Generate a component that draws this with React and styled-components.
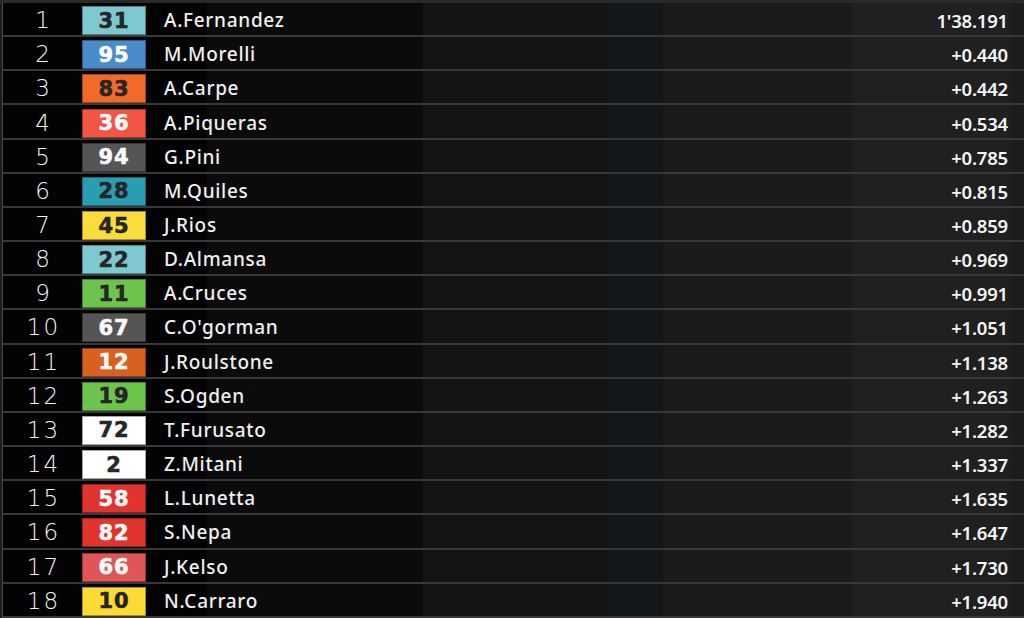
import React from "react";
import styled, { createGlobalStyle } from "styled-components";

const GlobalStyle = createGlobalStyle`
  html, body {
    margin: 0;
    padding: 0;
    background: #000;
    overflow: hidden;
  }
  * { box-sizing: border-box; }
`;

const Board = styled.div`
  width: 1024px;
  height: 618px;
  padding-top: 3px;
  display: grid;
  grid-template-rows: repeat(18, 34.17px);
  background:
    linear-gradient(#2a2a2a, #2a2a2a) top / 100% 3px no-repeat,
    linear-gradient(
      to right,
      #1c1c1c 0 2px,
      #4a4a4a 2px 3px,
      #030303 3px 207px,
      #0b0b0b 207px 423px,
      #141414 423px 608px,
      #121819 608px 663px,
      #1b1b1b 663px 852px,
      #202020 852px 1011px,
      #1c1c1c 1011px
    );
`;

const Row = styled.div`
  display: grid;
  grid-template-columns: 79px 64px 1fr auto;
  align-items: center;
  margin-left: 3px;
  padding-top: 3px;
  border-bottom: 2px solid #383838;
`;

const Pos = styled.div`
  text-align: center;
  color: #f2f2f2;
  font-family: "DejaVu Sans", sans-serif;
  font-weight: 200;
  font-size: 23px;
  letter-spacing: 2px;
  padding-left: 2px;
  line-height: 29px;
`;

const Badge = styled.div`
  height: 29px;
  display: flex;
  align-items: center;
  justify-content: center;
  background: ${(p) => p.$bg};
  color: ${(p) => (p.$light ? "#fafafa" : "#262626")};
  border: 1px solid rgba(0, 0, 0, 0.35);
  font-family: "DejaVu Sans", sans-serif;
  font-weight: 700;
  font-size: 21px;
  letter-spacing: 1px;
  -webkit-text-stroke: 0.6px ${(p) => (p.$light ? "#fafafa" : "#262626")};
`;

const Name = styled.div`
  padding-left: 18px;
  color: #f0f0f0;
  font-family: "Noto Sans", sans-serif;
  font-weight: 500;
  font-size: 19px;
  letter-spacing: 0.7px;
  line-height: 29px;
`;

const Time = styled.div`
  padding-right: 16px;
  color: #f5f5f5;
  font-family: "Noto Sans", sans-serif;
  font-weight: 600;
  font-size: 18.5px;
  letter-spacing: -0.2px;
  line-height: 29px;
  text-align: right;
`;

const riders = [
  ["31", "A.Fernandez", "1'38.191", "#7ec8cf", false],
  ["95", "M.Morelli", "+0.440", "#4a8cc9", true],
  ["83", "A.Carpe", "+0.442", "#f26a2a", false],
  ["36", "A.Piqueras", "+0.534", "#f25544", true],
  ["94", "G.Pini", "+0.785", "#555555", true],
  ["28", "M.Quiles", "+0.815", "#2a9db2", false],
  ["45", "J.Rios", "+0.859", "#fadc3c", false],
  ["22", "D.Almansa", "+0.969", "#7ec8cf", false],
  ["11", "A.Cruces", "+0.991", "#6dc44d", false],
  ["67", "C.O'gorman", "+1.051", "#555555", true],
  ["12", "J.Roulstone", "+1.138", "#d9601e", true],
  ["19", "S.Ogden", "+1.263", "#6dc44d", false],
  ["72", "T.Furusato", "+1.282", "#ffffff", false],
  ["2", "Z.Mitani", "+1.337", "#ffffff", false],
  ["58", "L.Lunetta", "+1.635", "#e2342e", true],
  ["82", "S.Nepa", "+1.647", "#e2342e", true],
  ["66", "J.Kelso", "+1.730", "#e05656", true],
  ["10", "N.Carraro", "+1.940", "#fcdc34", false],
];

export default function App() {
  return (
    <>
      <GlobalStyle />
      <Board>
        {riders.map(([num, name, time, bg, light], i) => (
          <Row key={num}>
            <Pos>{i + 1}</Pos>
            <Badge $bg={bg} $light={light}>
              {num}
            </Badge>
            <Name>{name}</Name>
            <Time>{time}</Time>
          </Row>
        ))}
      </Board>
    </>
  );
}
